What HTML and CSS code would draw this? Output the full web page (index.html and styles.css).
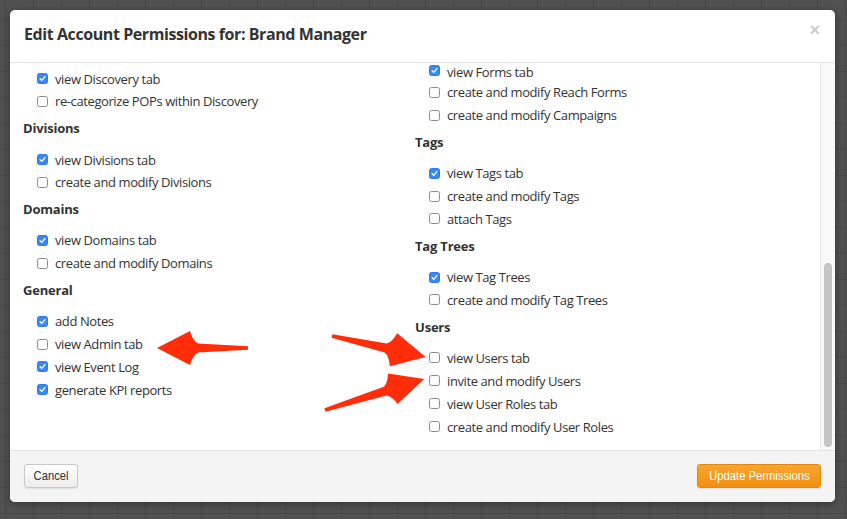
FILE: index.html
```html
<!DOCTYPE html>
<html>
<head>
    <meta charset="UTF-8">
    <title>Edit Account Permissions</title>
    <link rel="stylesheet" href="styles.css">
</head>
<body>
<div class="stage">
    <div class="modal">
        <div class="modal-head">
            <h3>Edit Account Permissions for: Brand Manager</h3>
            <span class="close">&times;</span>
        </div>
        <div class="modal-body">
            <div class="perm-grid">
                <div class="col">
                    <ul class="perms">
                        <li><span class="box on"><svg viewBox="0 0 11 11"><path d="M2.6 5.8 L4.6 7.8 L8.5 3.2"/></svg></span>view Discovery tab</li>
                        <li><span class="box"></span>re-categorize POPs within Discovery</li>
                    </ul>
                    <h4>Divisions</h4>
                    <ul class="perms">
                        <li><span class="box on"><svg viewBox="0 0 11 11"><path d="M2.6 5.8 L4.6 7.8 L8.5 3.2"/></svg></span>view Divisions tab</li>
                        <li><span class="box"></span>create and modify Divisions</li>
                    </ul>
                    <h4>Domains</h4>
                    <ul class="perms">
                        <li><span class="box on"><svg viewBox="0 0 11 11"><path d="M2.6 5.8 L4.6 7.8 L8.5 3.2"/></svg></span>view Domains tab</li>
                        <li><span class="box"></span>create and modify Domains</li>
                    </ul>
                    <h4>General</h4>
                    <ul class="perms">
                        <li><span class="box on"><svg viewBox="0 0 11 11"><path d="M2.6 5.8 L4.6 7.8 L8.5 3.2"/></svg></span>add Notes</li>
                        <li><span class="box"></span>view Admin tab</li>
                        <li><span class="box on"><svg viewBox="0 0 11 11"><path d="M2.6 5.8 L4.6 7.8 L8.5 3.2"/></svg></span>view Event Log</li>
                        <li><span class="box on"><svg viewBox="0 0 11 11"><path d="M2.6 5.8 L4.6 7.8 L8.5 3.2"/></svg></span>generate KPI reports</li>
                    </ul>
                </div>
                <div class="col col-right">
                    <ul class="perms">
                        <li class="cut"><span class="box on"><svg viewBox="0 0 11 11"><path d="M2.6 5.8 L4.6 7.8 L8.5 3.2"/></svg></span>view Forms tab</li>
                        <li><span class="box"></span>create and modify Reach Forms</li>
                        <li><span class="box"></span>create and modify Campaigns</li>
                    </ul>
                    <h4>Tags</h4>
                    <ul class="perms">
                        <li><span class="box on"><svg viewBox="0 0 11 11"><path d="M2.6 5.8 L4.6 7.8 L8.5 3.2"/></svg></span>view Tags tab</li>
                        <li><span class="box"></span>create and modify Tags</li>
                        <li><span class="box"></span>attach Tags</li>
                    </ul>
                    <h4>Tag Trees</h4>
                    <ul class="perms">
                        <li><span class="box on"><svg viewBox="0 0 11 11"><path d="M2.6 5.8 L4.6 7.8 L8.5 3.2"/></svg></span>view Tag Trees</li>
                        <li><span class="box"></span>create and modify Tag Trees</li>
                    </ul>
                    <h4>Users</h4>
                    <ul class="perms">
                        <li><span class="box"></span>view Users tab</li>
                        <li><span class="box"></span>invite and modify Users</li>
                        <li><span class="box"></span>view User Roles tab</li>
                        <li><span class="box"></span>create and modify User Roles</li>
                    </ul>
                </div>
            </div>
            <div class="scroll"><div class="thumb"></div></div>
        </div>
        <div class="modal-foot">
            <button class="btn btn-cancel"><span>Cancel</span></button>
            <button class="btn btn-orange"><span>Update Permissions</span></button>
        </div>
    </div>
    <!-- callout arrows drawn over the dialog -->
    <svg class="marks" width="847" height="519" viewBox="0 0 847 519">
        <path transform="translate(248 348) rotate(180)" d="M0 -1.8 L50 -4.6 Q55 -7 58 -17 L91 0 L58 17 Q55 7 50 4.6 L0 1.8 Z"/>
        <path transform="translate(332 336) rotate(12.6)" d="M0 -1.8 L55 -4.6 Q60 -7 63 -17 L96 0 L63 17 Q60 7 55 4.6 L0 1.8 Z"/>
        <path transform="translate(325 410) rotate(-17.4)" d="M0 -1.8 L63 -4.6 Q68 -7 71 -16 L104 0 L71 16 Q68 7 63 4.6 L0 1.8 Z"/>
    </svg>
</div>
</body>
</html>
```

FILE: styles.css
```css
*{margin:0;padding:0;box-sizing:border-box;}
html,body{height:100%;}
body{font:13px "Open Sans","Noto Sans",sans-serif;color:#333;background:#505050;overflow:hidden;}
ul,li{list-style:none;}
.stage{position:relative;width:847px;height:519px;padding:10px 0 0 10px;
    background-color:#515151;
    background-image:linear-gradient(90deg,#474747 1px,transparent 1px),linear-gradient(#474747 1px,transparent 1px);
    background-size:28px 100%,100% 26px;background-position:5px 0,0 19px;}
.modal{width:825px;height:492px;background:#fff;border-radius:5px;display:flex;flex-direction:column;overflow:hidden;box-shadow:0 2px 8px rgba(0,0,0,.35);}
.modal-head{height:53px;padding:14px 15px 0 14px;border-bottom:1px solid #e5e5e5;display:flex;justify-content:space-between;align-items:flex-start;}
.modal-head h3{font-size:16px;line-height:21px;font-weight:bold;color:#333;letter-spacing:-0.42px;}
.close{font:bold 18px/18px "Liberation Sans",sans-serif;color:#cbcbcb;margin-top:-3px;}
.modal-body{height:387px;display:flex;overflow:hidden;}
.perm-grid{flex:1;display:grid;grid-template-columns:392px 1fr;padding-left:13px;overflow:hidden;}
.col{padding-top:4.6px;}
.col-right{padding-top:0;}
.perms li{display:flex;align-items:center;height:22.85px;line-height:22.85px;padding-left:14px;white-space:nowrap;letter-spacing:-0.4px;}
.perms li.cut{height:18.43px;line-height:18px;align-items:flex-start;}
.perms li.cut .box{margin-top:2px;}
.col h4{font-size:13px;line-height:22.85px;font-weight:bold;margin:4.2px 0 8.2px;letter-spacing:-0.2px;}
.box{width:11px;height:11px;margin-right:7px;border:1px solid #8c8c8c;border-radius:2.5px;background:#fff;flex:none;margin-top:-1px;}
.box.on{background:#3a87f6;border-color:#2f79e6;}
.box svg{display:block;width:9px;height:9px;}
.box svg path{fill:none;stroke:#fff;stroke-width:1.7;stroke-linecap:round;stroke-linejoin:round;}
.scroll{width:15px;background:#f9f9f9;border-left:1px solid #e6e6e6;padding:200px 0 0 3px;}
.thumb{width:8px;height:184px;background:#c4c4c4;border-radius:4px;}
.modal-foot{flex:1;background:#f4f4f4;border-top:1px solid #e2e2e2;display:flex;justify-content:space-between;align-items:flex-start;padding:13px 14px 0 14px;}
.btn{height:24px;display:flex;justify-content:center;align-items:center;font:13.5px/22px "Liberation Sans",sans-serif;border-radius:3px;cursor:pointer;}
.btn span{display:inline-block;white-space:nowrap;transform:scaleX(0.83);}
.btn{color:#333;background:linear-gradient(#fff,#ececec);border:1px solid #c9c9c9;box-shadow:0 1px 1px rgba(0,0,0,.08);}
.btn-cancel{width:54px;}
.btn-orange{width:124px;color:#fff;background:linear-gradient(#f9a52f,#f28f10);border-color:#e3870f;}
.marks{position:absolute;left:0;top:0;pointer-events:none;}
.marks path{fill:#ff2d0a;}
```
